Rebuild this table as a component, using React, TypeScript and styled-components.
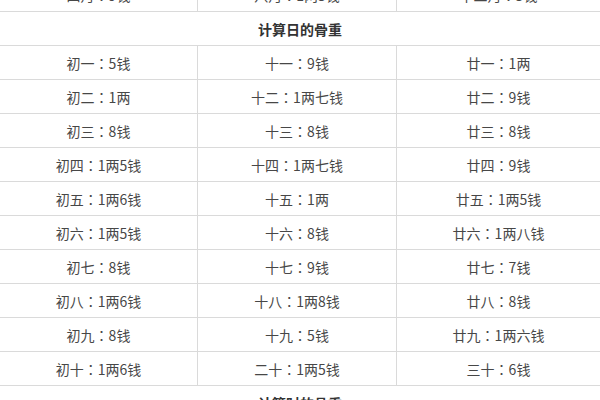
import styled, { createGlobalStyle } from 'styled-components'

const GlobalStyle = createGlobalStyle`
  html, body {
    margin: 0;
    padding: 0;
    background: #fff;
    overflow: hidden;
  }
  body {
    font-family: "Noto Sans CJK SC", "Microsoft YaHei", sans-serif;
  }
`

const Page = styled.div`
  width: 600px;
  height: 400px;
  overflow: hidden;
  background: #fff;
`

const Table = styled.table`
  width: 601px;
  margin: -23px 0 0 -1px;
  border-collapse: collapse;
  table-layout: fixed;
  font-size: 14px;
  color: #474747;
`

const Col = styled.col<{ $w: number }>`
  width: ${(p) => p.$w}px;
`

const Row = styled.tr`
  height: 34px;
`

const Cell = styled.td`
  border: 1px solid #dadada;
  text-align: center;
  vertical-align: middle;
  padding: 0;
  line-height: 20px;
  white-space: nowrap;
`

const TitleCell = styled(Cell)`
  font-weight: bold;
  color: #333;
`

// the centred full-width colon, as in the reference
const Colon = styled.span`
  font-family: "Noto Sans CJK TC", sans-serif;
`

const monthTail: [string, string][] = [
  ['四月', '9钱'],
  ['八月', '1两5钱'],
  ['十二月', '5钱']
]

const days: [string, string][][] = [
  [['初一', '5钱'], ['十一', '9钱'], ['廿一', '1两']],
  [['初二', '1两'], ['十二', '1两七钱'], ['廿二', '9钱']],
  [['初三', '8钱'], ['十三', '8钱'], ['廿三', '8钱']],
  [['初四', '1两5钱'], ['十四', '1两七钱'], ['廿四', '9钱']],
  [['初五', '1两6钱'], ['十五', '1两'], ['廿五', '1两5钱']],
  [['初六', '1两5钱'], ['十六', '8钱'], ['廿六', '1两八钱']],
  [['初七', '8钱'], ['十七', '9钱'], ['廿七', '7钱']],
  [['初八', '1两6钱'], ['十八', '1两8钱'], ['廿八', '8钱']],
  [['初九', '8钱'], ['十九', '5钱'], ['廿九', '1两六钱']],
  [['初十', '1两6钱'], ['二十', '1两5钱'], ['三十', '6钱']]
]

function Entry({ name, weight }: { name: string; weight: string }) {
  return (
    <Cell>
      {name}
      <Colon>：</Colon>
      {weight}
    </Cell>
  )
}

export default function App() {
  return (
    <Page>
      <GlobalStyle />
      <Table>
        <colgroup>
          <Col $w={198} />
          <Col $w={199} />
          <Col $w={204} />
        </colgroup>
        <tbody>
          {/* end of the month table */}
          <Row>
            {monthTail.map(([n, w]) => (
              <Entry key={n} name={n} weight={w} />
            ))}
          </Row>

          <Row>
            <TitleCell colSpan={3}>计算日的骨重</TitleCell>
          </Row>
          {days.map((row) => (
            <Row key={row[0][0]}>
              {row.map(([n, w]) => (
                <Entry key={n} name={n} weight={w} />
              ))}
            </Row>
          ))}

          <Row>
            <TitleCell colSpan={3}>计算时的骨重</TitleCell>
          </Row>
        </tbody>
      </Table>
    </Page>
  )
}
